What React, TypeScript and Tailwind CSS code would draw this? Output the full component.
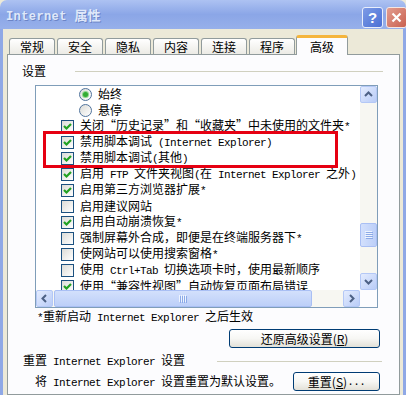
import React from 'react'

type Item = { kind: 'radio' | 'check'; label: string; on: boolean }

const items: Item[] = [
  { kind: 'radio', label: '始终', on: true },
  { kind: 'radio', label: '悬停', on: false },
  { kind: 'check', label: '关闭“历史记录”和“收藏夹”中未使用的文件夹*', on: true },
  { kind: 'check', label: '禁用脚本调试 (Internet Explorer)', on: true },
  { kind: 'check', label: '禁用脚本调试(其他)', on: true },
  { kind: 'check', label: '启用 FTP 文件夹视图(在 Internet Explorer 之外)', on: true },
  { kind: 'check', label: '启用第三方浏览器扩展*', on: true },
  { kind: 'check', label: '启用建议网站', on: false },
  { kind: 'check', label: '启用自动崩溃恢复*', on: true },
  { kind: 'check', label: '强制屏幕外合成，即便是在终端服务器下*', on: false },
  { kind: 'check', label: '使网站可以使用搜索窗格*', on: false },
  { kind: 'check', label: '使用 Ctrl+Tab 切换选项卡时，使用最新顺序', on: false },
  { kind: 'check', label: '使用“兼容性视图”自动恢复页面布局错误', on: true },
]

const tabs = ['常规', '安全', '隐私', '内容', '连接', '程序']

// latin runs get the narrow mono face, like SimSun's half-width glyphs
function Txt({ s }: { s: string }) {
  return (
    <>
      {s.split(/([\x20-\x7e]+)/).map((p, i) =>
        i % 2 === 1 ? (
          <span key={i} className="font-['Liberation_Mono',monospace] text-[11px] tracking-[-0.6px] whitespace-pre">
            {p}
          </span>
        ) : (
          p
        ),
      )}
    </>
  )
}

function Check({ on }: { on: boolean }) {
  return (
    <span className="w-[13px] h-[13px] shrink-0 border border-[#1c5180] bg-linear-to-br from-[#dcdcd7] to-white flex items-center justify-center">
      {on && (
        <svg width="11" height="11" viewBox="0 0 11 11">
          <path d="M2 5 L4.5 7.5 L9 3" stroke="#21a121" strokeWidth="2.2" fill="none" />
        </svg>
      )}
    </span>
  )
}

function Radio({ on }: { on: boolean }) {
  return (
    <span className="w-[13px] h-[13px] shrink-0 rounded-full border border-[#50739c] bg-linear-to-br from-[#dcdcd7] to-white flex items-center justify-center">
      {on && <span className="w-[5px] h-[5px] rounded-full bg-[#34ac34] shadow-[0_0_0_1px_#8fd68f]" />}
    </span>
  )
}

function Arrow({ dir }: { dir: 'up' | 'down' | 'left' | 'right' }) {
  const d = {
    up: 'M4 9 L7.5 5.5 L11 9',
    down: 'M4 6 L7.5 9.5 L11 6',
    left: 'M9 4 L5.5 7.5 L9 11',
    right: 'M6 4 L9.5 7.5 L6 11',
  }[dir]
  return (
    <div className="w-[17px] h-[17px] shrink-0 rounded-[2px] border border-[#b4c8f6] bg-linear-to-br from-[#e4ecfe] to-[#b9ccf7] flex items-center justify-center">
      <svg width="15" height="15" viewBox="0 0 15 15">
        <path d={d} stroke="#4d6185" strokeWidth="2" fill="none" />
      </svg>
    </div>
  )
}

function Grip({ vertical }: { vertical?: boolean }) {
  return vertical ? (
    <svg width="8" height="8" viewBox="0 0 8 8">
      {[0, 2, 4, 6].map(y => (
        <g key={y}>
          <line x1="0" y1={y + 0.5} x2="7" y2={y + 0.5} stroke="#eef4fe" />
          <line x1="1" y1={y + 1.5} x2="8" y2={y + 1.5} stroke="#8caae7" />
        </g>
      ))}
    </svg>
  ) : (
    <svg width="8" height="8" viewBox="0 0 8 8">
      {[0, 2, 4, 6].map(x => (
        <g key={x}>
          <line x1={x + 0.5} y1="0" x2={x + 0.5} y2="7" stroke="#eef4fe" />
          <line x1={x + 1.5} y1="1" x2={x + 1.5} y2="8" stroke="#8caae7" />
        </g>
      ))}
    </svg>
  )
}

function XpButton({ children, className }: { children: React.ReactNode; className: string }) {
  return (
    <div
      className={`h-[19px] rounded-[3px] border border-[#003c74] bg-linear-to-b from-white via-[#f7f7f4] to-[#e3e1d8] flex items-center justify-center ${className}`}
    >
      {children}
    </div>
  )
}

export default function App() {
  return (
    <div
      lang="zh-CN"
      className="relative w-[406px] h-[395px] overflow-hidden bg-[#ece9d8] font-['Noto_Sans_CJK_SC',sans-serif] text-[12px] leading-[16px] text-black"
    >
      {/* Title bar */}
      <div className="h-[29px] rounded-t-[7px] bg-linear-to-b from-[#adc2f2] via-[#8ba6e7] to-[#97b0ea] flex items-start pl-[6px]">
        <span className="mt-[7px] font-bold text-[#dfe8fa] [text-shadow:1px_1px_0_#6b84c6] whitespace-pre">
          <span className="font-['Liberation_Mono',monospace] text-[12px] tracking-[0.4px]">Internet </span>
          <span className="text-[13px]">属性</span>
        </span>
        <div className="ml-auto mt-[7px] -mr-[1px] flex gap-[3px]">
          <div className="w-[21px] h-[21px] rounded-[3px] border border-[#e8eefc] bg-linear-to-br from-[#7d9be6] to-[#4b6fd4] flex items-center justify-center text-white font-bold font-['Liberation_Sans',sans-serif] text-[15px] leading-none">
            ?
          </div>
          <div className="w-[21px] h-[21px] rounded-[3px] border border-[#f4e6e2] bg-linear-to-br from-[#e29d90] to-[#c9604f] flex items-center justify-center">
            <svg width="13" height="13" viewBox="0 0 13 13">
              <path d="M2.5 2.5 L10.5 10.5 M10.5 2.5 L2.5 10.5" stroke="white" strokeWidth="2.2" />
            </svg>
          </div>
        </div>
      </div>

      {/* Body */}
      <div className="h-[366px] border-x-[3px] border-[#8fa8e6] flex flex-col">
        {/* Tabs */}
        <div className="mt-[6px] h-[20px] flex items-end pl-[6px] gap-[2px] relative z-10 -mb-[1px]">
          {tabs.map(t => (
            <div
              key={t}
              className="w-[46px] h-[16px] mb-[1px] rounded-t-[3px] border border-b-0 border-[#919b9c] bg-linear-to-b from-white to-[#ecebe5] flex items-center justify-center"
            >
              {t}
            </div>
          ))}
          <div className="w-[52px] h-[20px] -ml-[1px] rounded-t-[3px] border-x border-[#919b9c] border-t-[3px] border-t-[#f5b53c] bg-[#fcfcfe] flex justify-center pt-[1px]">
            高级
          </div>
        </div>

        {/* Tab page */}
        <div className="ml-[4px] w-[393px] flex-1 border border-[#919b9c] bg-[#fcfcfe] flex flex-col">
          <div className="mt-[8px] h-[16px] flex items-center pl-[14px] pr-[16px]">
            <span>设置</span>
            <div className="flex-1 ml-[29px] h-px bg-[#d0d0bf]" />
          </div>

          {/* List */}
          <div className="mt-[6px] ml-[27px] w-[343px] h-[223px] border border-[#7f9db9] bg-white flex flex-col">
            <div className="flex h-[204px]">
              <div className="flex-1 overflow-hidden">
                {items.map((it, i) => (
                  <div
                    key={i}
                    className={`h-[16px] flex items-center gap-[6px] whitespace-nowrap ${it.kind === 'radio' ? 'pl-[43px]' : 'pl-[25px]'}`}
                  >
                    {it.kind === 'radio' ? <Radio on={it.on} /> : <Check on={it.on} />}
                    <span>
                      <Txt s={it.label} />
                    </span>
                  </div>
                ))}
              </div>
              <div className="w-[17px] flex flex-col bg-[#f7f7f2]">
                <Arrow dir="up" />
                <div className="h-[120px]" />
                <div className="h-[24px] rounded-[2px] border border-[#a9bff4] bg-linear-to-r from-[#d3e0fc] to-[#bccff8] flex items-center justify-center">
                  <Grip vertical />
                </div>
                <div className="flex-1" />
                <Arrow dir="down" />
              </div>
            </div>
            <div className="flex h-[17px]">
              <div className="flex-1 flex bg-[#f7f7f2]">
                <Arrow dir="left" />
                <div className="w-[258px] ml-[1px] rounded-[2px] border border-[#a9bff4] bg-linear-to-b from-[#d3e0fc] to-[#bccff8] flex items-center justify-center">
                  <Grip />
                </div>
                <div className="flex-1" />
                <Arrow dir="right" />
              </div>
              <div className="w-[17px] bg-[#fcfcfe]" />
            </div>
          </div>

          <div className="pl-[29px] whitespace-nowrap">
            <Txt s="*重新启动 Internet Explorer 之后生效" />
          </div>

          <div className="mt-[3px] flex justify-end pr-[19px]">
            <XpButton className="w-[151px]">
              还原高级设置(<span className="underline">R</span>)
            </XpButton>
          </div>

          <div className="mt-[5px] h-[16px] flex items-center pl-[15px] pr-[17px] whitespace-nowrap">
            <span>
              <Txt s="重置 Internet Explorer 设置" />
            </span>
            <div className="flex-1 ml-[32px] h-px bg-[#d0d0bf]" />
          </div>

          <div className="mt-[3px] flex items-center pl-[27px] pr-[19px] whitespace-nowrap">
            <span>
              <Txt s="将 Internet Explorer 设置重置为默认设置。" />
            </span>
            <XpButton className="ml-auto w-[87px]">
              重置(<span className="underline">S</span>)<Txt s="..." />
            </XpButton>
          </div>
        </div>
      </div>

      {/* annotation */}
      <div className="absolute left-[43px] top-[131px] w-[295px] h-[37px] border-[3px] border-[#e60012]" />
    </div>
  )
}
